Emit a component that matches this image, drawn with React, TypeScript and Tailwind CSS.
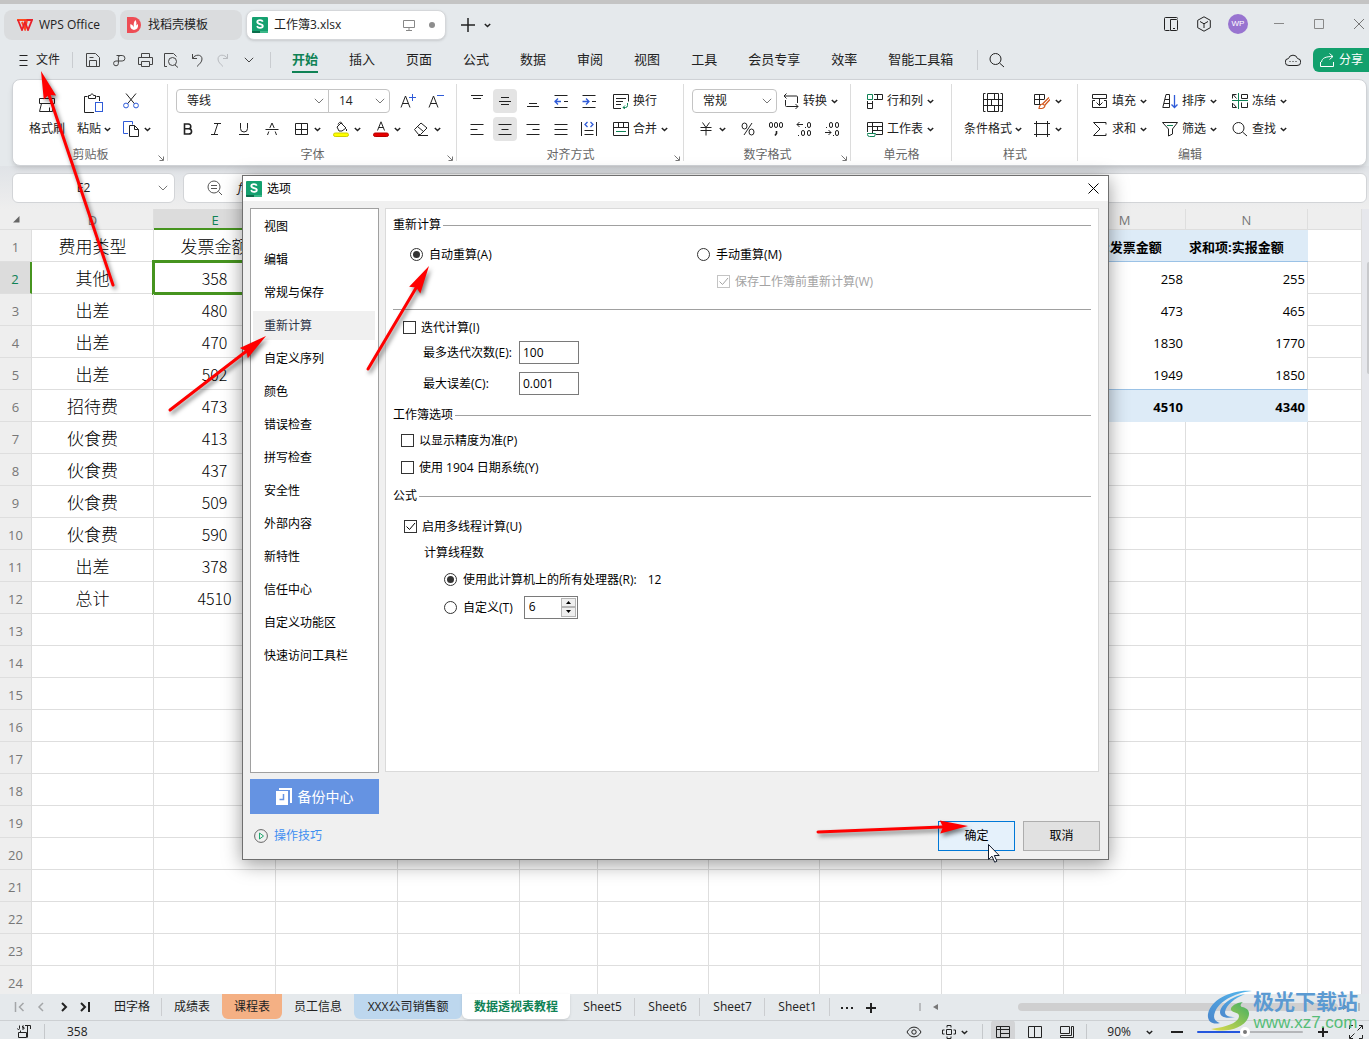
import type { ReactNode } from 'react'

type IconProps = { w?: number; h?: number; className?: string; sw?: number; children: ReactNode }

function Icon({ w = 16, h = 16, className = '', sw = 1, children }: IconProps) {
  return (
    <svg
      width={w}
      height={h}
      viewBox={`0 0 ${w} ${h}`}
      fill="none"
      stroke="currentColor"
      strokeWidth={sw}
      className={`shrink-0 ${className}`}
      aria-hidden="true"
    >
      {children}
    </svg>
  )
}

const BLUE = '#2f5bd8'
const GREEN = '#0f8255'

const Chevron = () => (
  <Icon w={7} h={5} sw={1.5}>
    <path d="M.8 1l2.7 2.5L6.200 1" />
  </Icon>
)

const WideChevron = ({ className = '' }: { className?: string }) => (
  <Icon w={10} h={6} className={className}>
    <path d="M.8.8L5 5 9.200.8" />
  </Icon>
)

const SheetLogo = () => (
  <svg width="16" height="16" viewBox="0 0 16 16" className="shrink-0" aria-hidden="true">
    <rect width="16" height="16" rx="1" fill="#14a06f" />
    <path d="M0 14h8v2H1a1 1 0 0 1-1-1z" fill="#0b6e4b" />
    <path d="M8 14h8v1a1 1 0 0 1-1 1H8z" fill="#3cb889" />
    <path
      d="M10.800 4.600C10.300 3.600 9.300 3.200 8 3.200c-1.500 0-2.700.7-2.700 1.900 0 2.700 5.500 1.300 5.500 3.900 0 1.200-1.200 1.900-2.800 1.900-1.500 0-2.500-.6-3-1.700"
      fill="none"
      stroke="#fff"
      strokeWidth="1.800"
    />
  </svg>
)

/* ---------- ribbon glyphs ---------- */

const glyphs = {
  brush: (
    <Icon w={20} h={20}>
      <path d="M7.500 5.500V1.500h5v4M2.500 10.500v-5h15v5zM4.500 10.500l-2 8h13l1-8M12.500 18v-3.500" />
    </Icon>
  ),
  paste: (
    <Icon w={20} h={20}>
      <path d="M10 19.500H.5V3.500h3M15.500 8V3.500h-3M4.500 5.500v-3h2c0-2 3-2 3 0h2v3z" />
      <rect x="11.500" y="9.500" width="7" height="9" stroke={BLUE} />
    </Icon>
  ),
  cut: (
    <Icon>
      <path d="M3 .5l8.500 10.300M13 .5L4.500 10.800" />
      <circle cx="3" cy="12.500" r="2.400" stroke={BLUE} />
      <circle cx="13" cy="12.500" r="2.400" stroke={BLUE} />
    </Icon>
  ),
  copy: (
    <Icon>
      <path d="M5 12.500H.5v-12h9v3" stroke={BLUE} />
      <path d="M6.500 4.500h5l4 4v7h-9zM11.500 4.500v4h4" />
    </Icon>
  ),
  fontUp: (
    <Icon>
      <path d="M1 14.500L5.500 3 10 14.500M2.600 10.500h5.800" />
      <path d="M9 4.500h7M12.500 1v7" stroke={BLUE} />
    </Icon>
  ),
  fontDown: (
    <Icon>
      <path d="M1 14.500L5.500 3 10 14.500M2.600 10.500h5.800" />
      <path d="M9 2.500h7" stroke={BLUE} />
    </Icon>
  ),
  bold: (
    <Icon sw={1.6}>
      <path d="M4.500 3v10h4.200c3.800 0 3.800-5.200 0-5.200H4.500h3.800c3.300 0 3.300-4.800 0-4.800z" />
    </Icon>
  ),
  italic: (
    <Icon>
      <path d="M6 2.500h7M3 13.500h7M9.800 2.500l-3.600 11" />
    </Icon>
  ),
  underline: (
    <Icon>
      <path d="M4.500 2v5.500a3.500 3.500 0 0 0 7 0V2M3 13.500h10" />
    </Icon>
  ),
  strike: (
    <Icon>
      <path d="M1.500 8.500h13M5.800 7L8 2l2.200 5M4.800 10.500L3.500 14M11.200 10.500l1.300 3.500" />
    </Icon>
  ),
  border: (
    <Icon>
      <path d="M2.500 2.500h12v11h-12zM8.500 2.500v11M2.500 8.500h12" />
    </Icon>
  ),
  fill: (
    <Icon>
      <path d="M4 6l4-4 5 5-4 3H6zM5 3.500C6 .5 9 .5 9 3M13.500 8v2" />
      <rect x=".5" y="12" width="15" height="3.500" rx="1.700" fill="#ff0" stroke="#cfcf00" />
    </Icon>
  ),
  color: (
    <Icon>
      <path d="M4.500 9.500L8 .8l3.500 8.700M5.700 6.500h4.600" />
      <rect x=".5" y="12" width="15" height="3.500" rx="1.700" fill="#e60000" stroke="#b80000" />
    </Icon>
  ),
  eraser: (
    <Icon>
      <path d="M1.500 8.500L8 2l6 5-6.500 6.500h-2zM4.500 5.500l6 5M5 14.500h10" />
    </Icon>
  ),
  top: (
    <Icon>
      <path d="M2 2.500h12M4 5.500h8" />
    </Icon>
  ),
  middle: (
    <Icon>
      <path d="M4 4.500h8M2 8.500h12M4 11.500h8" />
    </Icon>
  ),
  bottom: (
    <Icon>
      <path d="M4 10.500h8M2 13.500h12" />
    </Icon>
  ),
  outdent: (
    <Icon>
      <path d="M1.500 2.500h13M1.500 14.500h13M11 8.500h4" />
      <path d="M8 8.500H1.500M5 5.500l-3 3 3 3" stroke={BLUE} strokeWidth="1.300" />
    </Icon>
  ),
  indent: (
    <Icon>
      <path d="M1.500 2.500h13M1.500 14.500h13M11 8.500h4" />
      <path d="M1.500 8.500H8M5 5.500l3 3-3 3" stroke={BLUE} strokeWidth="1.300" />
    </Icon>
  ),
  left: (
    <Icon>
      <path d="M1.500 3.500h13M1.500 8.500h7M1.500 13.500h13" />
    </Icon>
  ),
  center: (
    <Icon>
      <path d="M1.500 3.500h13M4.500 8.500h7M1.500 13.500h13" />
    </Icon>
  ),
  right: (
    <Icon>
      <path d="M1.500 3.500h13M7.500 8.500h7M1.500 13.500h13" />
    </Icon>
  ),
  justify: (
    <Icon>
      <path d="M1.500 3.500h13M1.500 8.500h13M1.500 13.500h13" />
    </Icon>
  ),
  spread: (
    <Icon>
      <path d="M.5 1v14M15.500 1v14M3.500 9.500h9M3.500 13.500h9" />
      <path d="M6.500 1L4 3.500 6.500 6M9.500 1L12 3.500 9.500 6" stroke={BLUE} strokeWidth="1.300" />
    </Icon>
  ),
  wrap: (
    <Icon>
      <path d="M8 15.500H.5V1.500h15v7M3 5.500h10M3 8.500h7M3 11.500h5" />
      <path d="M14.500 10v2.500a2 2 0 0 1-2 2H10M12 12.500l-2 2 2 1.500" stroke={GREEN} />
    </Icon>
  ),
  merge: (
    <Icon>
      <path d="M.5 1.500h15v13H.5zM.5 6.500h15M5.500 1.500v5M10.500 1.500v5" />
      <path d="M3 10.500h10" stroke={GREEN} />
    </Icon>
  ),
  convert: (
    <Icon>
      <path d="M2.500 7v5.500a1 1 0 0 0 1 1H15M12.500 11l2.500 2.500-2.500 2.500M3.500.5L1 3l2.500 2.500M1 3h12.500a1 1 0 0 1 1 1v6" />
    </Icon>
  ),
  yen: (
    <Icon>
      <path d="M4.500 1.500l3.500 5 3.500-5M2.500 6.500h11M2.500 9.500h11M8 6.500v8" />
    </Icon>
  ),
  percent: (
    <Icon>
      <ellipse cx="4.500" cy="5" rx="2.500" ry="3" />
      <ellipse cx="11.500" cy="11" rx="2.500" ry="3" />
      <path d="M12 2L4 14" />
    </Icon>
  ),
  thousands: (
    <Icon>
      <rect x="1.500" y="1.500" width="3" height="5" rx="1.500" />
      <rect x="6.500" y="1.500" width="3" height="5" rx="1.500" />
      <rect x="11.500" y="1.500" width="3" height="5" rx="1.500" />
      <path d="M8.500 10v2.500l-1.500 2" strokeWidth="1.600" />
    </Icon>
  ),
  decLess: (
    <Icon>
      <path d="M7 3.500H1M3.500 1L1 3.500 3.500 6M9 6.500h1M2 14.500h1" />
      <rect x="11.500" y="1.500" width="3" height="5" rx="1.500" />
      <rect x="5.500" y="9.500" width="3" height="5" rx="1.500" />
      <rect x="11.500" y="9.500" width="3" height="5" rx="1.500" />
    </Icon>
  ),
  decMore: (
    <Icon>
      <path d="M1 11.500h6M4.500 9L7 11.500 4.500 14M9 14.500h1M2 6.500h1" />
      <rect x="5.500" y="1.500" width="3" height="5" rx="1.500" />
      <rect x="11.500" y="1.500" width="3" height="5" rx="1.500" />
      <rect x="11.500" y="9.500" width="3" height="5" rx="1.500" />
    </Icon>
  ),
  rowCol: (
    <Icon>
      <path d="M.5 1.500h5v5h-5z" stroke={GREEN} />
      <path d="M7 1.500h8.500v5H7M10.500 1.500v5M.5 8v7.500h5V8M.5 10.500h5" />
    </Icon>
  ),
  sheet: (
    <Icon>
      <path d="M.5 11V1.500h15v12H9M.5 5.500h15M5.500 1.500v11M5.500 9.500h10M10.500 5.500v4" />
      <path d="M.5 12.500h8l-1 3h-5a2 2 0 0 1-2-2z" stroke={GREEN} />
    </Icon>
  ),
  conditional: (
    <Icon w={20} h={20}>
      <path d="M2.500.5h-2v18h2M17.500.5h2v18h-2M4.500.5h11v18h-11zM.5 6.500h4M15.500 6.500h4M.5 12.500h4M15.500 12.500h4M4.500 6.500h11M4.500 12.500h11M11.500.5v6M8.500 6.500v6M11.500 12.500v6" />
    </Icon>
  ),
  cellStyle: (
    <Icon>
      <path d="M7 11.500H.5v-10h10V6M.5 6.500h10M5.500 1.500v10" />
      <path d="M15 4.500L8.500 11M16 6.500L11 12M8.500 11c-2 0-3 1.500-3.500 4.500 3.500.3 6-.8 6-3z" stroke="#d2571c" strokeWidth="1.200" />
    </Icon>
  ),
  frame: (
    <Icon>
      <path d="M2.500 0v16M13.500 0v16M0 2.500h16M0 13.500h16" />
    </Icon>
  ),
  down: (
    <Icon>
      <path d="M.5 1.500h14v4H.5zM3 7.500H.5v7h14v-7H12M7.500 5.500v7M4.500 9.500l3 3 3-3" />
    </Icon>
  ),
  sum: (
    <Icon>
      <path d="M14 3.500v-2H1.500L8 8l-6.500 6.500H14v-2" />
    </Icon>
  ),
  sort: (
    <Icon>
      <path d="M.8 14.500L4 1.500h3.500v13zM3 6.500h4.500M2 10.500h5.500" />
      <path d="M12.500 2v12.500M9.500 11.500l3 3 3-3" stroke={BLUE} strokeWidth="1.300" />
    </Icon>
  ),
  filter: (
    <Icon>
      <path d="M.5 1.500h15L10.500 8v5l-4 2V8z" />
      <path d="M5 4.500h6" stroke={GREEN} />
    </Icon>
  ),
  freeze: (
    <Icon>
      <path d="M.5 1.500h4M.5 1.500v4M.5 10v4.500h4M9.500 1.500h6v4h-6zM15.500 9.500v5h-6v-5M1 1.500l3.500 4M1 10.500l3.500 4" />
      <path d="M6.500 0v16M0 7.500h16" stroke={GREEN} />
    </Icon>
  ),
  search: (
    <Icon>
      <circle cx="6.500" cy="7" r="5.500" />
      <path d="M10.500 11l4.500 4" />
    </Icon>
  ),
}

type GlyphName = keyof typeof glyphs

type ToolProps = { icon: GlyphName; label: string; active?: boolean }

const Tool = ({ icon, label, active }: ToolProps) => (
  <button
    type="button"
    aria-label={label}
    className="flex h-7 w-7 shrink-0 items-center justify-center"
  >
    <span className={`flex h-6 w-6 items-center justify-center rounded ${active ? 'bg-[#e4e4e4]' : ''}`}>
      {glyphs[icon]}
    </span>
  </button>
)

const DropTool = ({ icon, label, className = 'w-10' }: { icon: GlyphName; label: string; className?: string }) => (
  <button type="button" aria-label={label} className={`flex h-7 shrink-0 items-center gap-[5px] ${className}`}>
    {glyphs[icon]}
    <Chevron />
  </button>
)

type TextToolProps = { icon: GlyphName; text: string; drop?: boolean; className?: string }

const TextTool = ({ icon, text, drop = true, className = '' }: TextToolProps) => (
  <button type="button" className={`flex h-7 shrink-0 items-center gap-1 ${className}`}>
    {glyphs[icon]}
    {text}
    {drop && <Chevron />}
  </button>
)

function Combo({ label, value, className }: { label: string; value: string; className: string }) {
  return (
    <div className={`relative flex h-6 items-center border border-[#c4c4c4] ${className}`}>
      <select aria-label={label} className="h-full w-full appearance-none bg-transparent pl-[10px] outline-none">
        <option>{value}</option>
      </select>
      <WideChevron className="pointer-events-none absolute right-1 text-[#777]" />
    </div>
  )
}

type GroupProps = { title: string; className: string; launcher?: boolean; last?: boolean; children: ReactNode }

function Group({ title, className, launcher, last, children }: GroupProps) {
  return (
    <section className={`relative flex shrink-0 flex-col pt-[7px] ${className}`}>
      {children}
      <div className="flex h-[22px] items-center justify-center pt-[2px] text-[#666]">{title}</div>
      {launcher && (
        <Icon w={6} h={6} className="absolute right-[4px] bottom-1 text-[#777]">
          <path d="M.5 .5l4.500 4.500M5.500 1.500v4h-4" />
        </Icon>
      )}
      {!last && <span className="absolute top-1 right-0 bottom-1 w-px bg-[#dcdcdc]" />}
    </section>
  )
}

function TitleBar() {
  return (
    <header className="flex h-[42px] shrink-0 items-center pl-1 text-xs">
      <button type="button" className="flex h-[30px] w-28 items-center gap-[6px] rounded-lg bg-[#dadcde] pl-[13px]">
        <svg width="16" height="12" viewBox="0 0 16 12" fill="none" aria-hidden="true">
          <path d="M0 1h10l-2 9-3-7" stroke="#ff4a1c" strokeWidth="2" />
          <path d="M1 1l4 10L8 3l3 8 4-10H9.500" stroke="#e8202a" strokeWidth="1.800" />
        </svg>
        WPS Office
      </button>
      <button type="button" className="ml-1 flex h-[30px] w-[122px] items-center gap-[6px] rounded-lg bg-[#dadcde] pl-[6px]">
        <svg width="16" height="16" viewBox="0 0 16 16" aria-hidden="true">
          <path d="M1 0h6a8 8 0 0 1 0 16H1z" fill="#ee4d55" />
          <path d="M8 13C4 12 4 9 4.500 7c2 .7 3 2 3.500 3.500C7.200 7 8 4.500 9.500 3c1 2 1.300 3.500.6 5.500L12 7c.5 3.500-.8 5.500-4 6z" fill="#fff" />
        </svg>
        找稻壳模板
      </button>
      <div className="ml-1 flex h-[30px] w-[200px] items-center gap-[6px] rounded-lg border border-[#d5d7da] bg-white pr-[10px] pl-[5px] shadow-sm">
        <SheetLogo />
        <span className="flex-1">工作簿3.xlsx</span>
        <Icon w={12} h={12} className="text-[#888]">
          <path d="M.5 1.500h11v7H.5zM6 8.500v3M3 11.500h6" />
        </Icon>
        <span className="ml-2 h-[6px] w-[6px] rounded-full bg-[#8d8d8d]" />
      </div>
      <button type="button" aria-label="新建" className="ml-[14px]">
        <Icon sw={1.5}>
          <path d="M8 1v14M1 8h14" />
        </Icon>
      </button>
      <button type="button" aria-label="标签列表" className="ml-2">
        <Chevron />
      </button>
      <div className="flex-1" />
      <div className="flex items-center pb-[2px]">
        <Icon w={14} h={14}>
          <path d="M5.500 13.500h-4a1 1 0 0 1-1-1v-11a1 1 0 0 1 1-1h11a1 1 0 0 1 1 1M6.500 2.500h6a1 1 0 0 1 1 1v9a1 1 0 0 1-1 1h-6zM9 11.500h2" />
        </Icon>
        <Icon w={16} h={16} className="ml-[18px]">
          <path d="M8 .8l6.300 3.500v7.400L8 15.200l-6.300-3.500V4.300zM4 5.500l4 2.300 4-2.300M8 7.800V12" />
        </Icon>
        <span className="ml-4 flex h-5 w-5 items-center justify-center rounded-full bg-[#9874d0] font-['Liberation_Sans',sans-serif] text-[8px] text-white">
          WP
        </span>
        <button type="button" aria-label="最小化" className="ml-[26px] text-[#888]">
          <Icon w={10} h={10}>
            <path d="M0 4.500h10" />
          </Icon>
        </button>
        <button type="button" aria-label="最大化" className="ml-[30px] text-[#888]">
          <Icon w={10} h={10}>
            <path d="M.5.5h9v9h-9z" />
          </Icon>
        </button>
        <button type="button" aria-label="关闭窗口" className="mr-[5px] ml-[30px] text-[#777]">
          <Icon w={10} h={10}>
            <path d="M0 0l10 10M10 0L0 10" />
          </Icon>
        </button>
      </div>
    </header>
  )
}

const menus = ['开始', '插入', '页面', '公式', '数据', '审阅', '视图', '工具', '会员专享', '效率', '智能工具箱']

function MenuBar() {
  return (
    <nav className="flex h-[33px] shrink-0 items-center pb-[6px] text-[13px]">
      <button type="button" className="flex items-center gap-[7px] pl-[19px] text-xs">
        <Icon w={10} h={12}>
          <path d="M.5 1.500h8M.5 6.500h8M.5 11.500h8" />
        </Icon>
        文件
      </button>
      <span className="mr-[12px] ml-3 h-4 w-px bg-[#c9ccd0]" />
      <div className="flex items-center gap-[10px] text-[#444]">
        <Icon>
          <path d="M1.500 14.500v-13h9l4 4v9zM4.500 14.500v-6h7v6M4.500 5.500h4" />
        </Icon>
        <Icon>
          <path d="M5.500 3.500h5.700a2.700 2.700 0 0 1 0 5.500H5a2.400 2.400 0 1 0 2.400 2.400V5.500a2 2 0 0 1 2-2" />
        </Icon>
        <Icon>
          <path d="M4.500 5V1.500h8V5M4 12.500H1.500v-7h14v7H13M4.500 9.500h8v5h-8z" />
        </Icon>
        <Icon>
          <path d="M4 14.500H1.500v-13h9l3 3M12 13l3 2.500" />
          <circle cx="9.500" cy="9.500" r="4" />
        </Icon>
        <Icon>
          <path d="M3.500 2v4.500h4.500M3.500 6.500C6 2 13 2 13 7c0 3-2.500 5-5 7.500" />
        </Icon>
        <Icon className="text-[#b8bbbf]">
          <path d="M12.500 2v4.500H8M12.500 6.500C10 2 3 2 3 7c0 3 2.500 5 5 7.500" />
        </Icon>
        <WideChevron className="ml-[3px]" />
      </div>
      <span className="ml-4 h-4 w-px bg-[#c9ccd0]" />
      <div className="ml-[21px] flex gap-[31px]">
        {menus.map((name, i) => (
          <button
            key={name}
            type="button"
            className={
              i === 0
                ? 'h-[27px] border-b-2 border-[#0f8255] pt-[2px] font-bold text-[#0f8255]'
                : 'h-[27px] border-b-2 border-transparent pt-[2px]'
            }
          >
            {name}
          </button>
        ))}
      </div>
      <span className="mr-[11px] ml-6 h-5 w-px bg-[#c9ccd0]" />
      {glyphs.search}
      <div className="flex-1" />
      <Icon w={16} h={14} className="mr-3">
        <path d="M4 12.500a3.500 3.500 0 0 1-.5-7 4.700 4.700 0 0 1 9 0 3.500 3.500 0 0 1-.5 7zM4.500 8.500h1M7.500 8.500h1M10.500 8.500h1" />
      </Icon>
      <button type="button" className="flex h-6 items-center gap-1 rounded-l-md bg-[#12a06d] pr-[6px] pl-[7px] text-xs text-white">
        <Icon w={15} h={14}>
          <path d="M.5 9v4.500h13V9M1.500 9c.5-4 4-5.500 11.500-5.500M9.500 .5l3.500 3-3.500 3" />
        </Icon>
        分享
      </button>
    </nav>
  )
}

function Ribbon() {
  return (
    <div className="relative ml-3 mr-[2px] flex h-[87px] shrink-0 overflow-hidden rounded-lg border border-[#cfd2d6] bg-white text-xs shadow-md">
      <Group title="剪贴板" className="w-[155px]" launcher>
        <div className="flex gap-3 pl-4">
          {[
            { name: '格式刷', icon: glyphs.brush, drop: false },
            { name: '粘贴', icon: glyphs.paste, drop: true },
          ].map((b) => (
            <button key={b.name} type="button" className="flex flex-col items-center">
              <span className="flex h-7 items-center pt-1">{b.icon}</span>
              <span className="flex h-7 items-center gap-[3px]">
                {b.name}
                {b.drop && <Chevron />}
              </span>
            </button>
          ))}
          <div>
            <div className="flex h-7 items-center">
              <button type="button" aria-label="剪切">
                {glyphs.cut}
              </button>
            </div>
            <DropTool icon="copy" label="复制" />
          </div>
        </div>
      </Group>

      <Group title="字体" className="w-[289px]" launcher>
        <div className="flex h-7 items-center pl-2">
          <Combo label="字体" value="等线" className="w-[153px] rounded-l" />
          <Combo label="字号" value="14" className="-ml-px w-[62px] rounded-r" />
          <span className="w-1" />
          <Tool icon="fontUp" label="增大字号" />
          <Tool icon="fontDown" label="减小字号" />
        </div>
        <div className="flex h-7 items-center pl-[6px]">
          <Tool icon="bold" label="加粗" />
          <Tool icon="italic" label="倾斜" />
          <Tool icon="underline" label="下划线" />
          <Tool icon="strike" label="删除线" />
          <span className="w-[7px]" />
          <DropTool icon="border" label="边框" />
          <DropTool icon="fill" label="填充颜色" />
          <DropTool icon="color" label="字体颜色" />
          <DropTool icon="eraser" label="清除" />
        </div>
      </Group>

      <Group title="对齐方式" className="w-[227px]" launcher>
        <div className="flex h-7 items-center pl-[6px]">
          <Tool icon="top" label="顶端对齐" />
          <Tool icon="middle" label="垂直居中" active />
          <Tool icon="bottom" label="底端对齐" />
          <Tool icon="outdent" label="减少缩进" />
          <Tool icon="indent" label="增加缩进" />
          <TextTool icon="wrap" text="换行" drop={false} className="ml-[10px]" />
        </div>
        <div className="flex h-7 items-center pl-[6px]">
          <Tool icon="left" label="左对齐" />
          <Tool icon="center" label="水平居中" active />
          <Tool icon="right" label="右对齐" />
          <Tool icon="justify" label="两端对齐" />
          <Tool icon="spread" label="分散对齐" />
          <TextTool icon="merge" text="合并" className="ml-[10px]" />
        </div>
      </Group>

      <Group title="数字格式" className="w-[167px]" launcher>
        <div className="flex h-7 items-center pl-2">
          <Combo label="数字格式" value="常规" className="w-[85px] rounded" />
          <TextTool icon="convert" text="转换" className="ml-[6px]" />
        </div>
        <div className="flex h-7 items-center pl-[14px]">
          <DropTool icon="yen" label="货币" className="w-9" />
          <Tool icon="percent" label="百分比" />
          <Tool icon="thousands" label="千位分隔" />
          <Tool icon="decLess" label="减少小数位" />
          <Tool icon="decMore" label="增加小数位" />
        </div>
      </Group>

      <Group title="单元格" className="w-[101px]">
        <TextTool icon="rowCol" text="行和列" className="pl-4" />
        <TextTool icon="sheet" text="工作表" className="pl-4" />
      </Group>

      <Group title="样式" className="w-[126px]">
        <div className="flex gap-3 pl-3">
          <button type="button" className="flex flex-col items-center">
            <span className="flex h-7 items-center pt-1">{glyphs.conditional}</span>
            <span className="flex h-7 items-center gap-[3px]">
              条件格式
              <Chevron />
            </span>
          </button>
          <div>
            <DropTool icon="cellStyle" label="单元格样式" />
            <DropTool icon="frame" label="表格边框" />
          </div>
        </div>
      </Group>

      <Group title="编辑" className="w-[224px]" last>
        <div className="grid grid-cols-[70px_70px_70px] pl-[14px]">
          <TextTool icon="down" text="填充" />
          <TextTool icon="sort" text="排序" />
          <TextTool icon="freeze" text="冻结" />
          <TextTool icon="sum" text="求和" />
          <TextTool icon="filter" text="筛选" />
          <TextTool icon="search" text="查找" />
        </div>
      </Group>
    </div>
  )
}

function FormulaBar() {
  return (
    <div className="flex h-[43px] shrink-0 items-center gap-2 bg-linear-to-b from-[#e0e3e7] to-[#eee] pr-[2px] pl-3 text-xs">
      <div className="relative flex h-[30px] w-[163px] items-center rounded-md border border-[#d2d4d7] bg-white">
        <input aria-label="名称框" defaultValue="E2" className="w-full bg-transparent pr-5 text-center outline-none" />
        <WideChevron className="pointer-events-none absolute right-[6px] text-[#777]" />
      </div>
      <div className="flex h-[30px] flex-1 items-center rounded-md border border-[#d2d4d7] bg-white pl-[23px]">
        <Icon className="text-[#555]">
          <circle cx="7" cy="7" r="6" />
          <path d="M11.500 11.500L15 15M4 5.500h6M4 8.500h6" />
        </Icon>
        <label htmlFor="formula" className="pl-[15px] text-[13px] italic">
          fx
        </label>
        <input id="formula" className="ml-2 min-w-0 flex-1 outline-none" />
      </div>
    </div>
  )
}

const columns = [
  { name: 'D', width: 'w-[122px]' },
  { name: 'E', width: 'w-[122px]' },
  { name: 'F', width: 'w-[122px]' },
  { name: 'G', width: 'w-[122px]' },
  { name: 'H', width: 'w-[78px]' },
  { name: 'I', width: 'w-[111px]' },
  { name: 'J', width: 'w-[111px]' },
  { name: 'K', width: 'w-[122px]' },
  { name: 'L', width: 'w-[122px]' },
  { name: 'M', width: 'w-[122px]' },
  { name: 'N', width: 'w-[122px]' },
  { name: '', width: '' },
]

const expenses = [
  ['费用类型', '发票金额'],
  ['其他', '358'],
  ['出差', '480'],
  ['出差', '470'],
  ['出差', '502'],
  ['招待费', '473'],
  ['伙食费', '413'],
  ['伙食费', '437'],
  ['伙食费', '509'],
  ['伙食费', '590'],
  ['出差', '378'],
  ['总计', '4510'],
]

const pivot = [
  ['求和项:发票金额', '求和项:实报金额'],
  ['258', '255'],
  ['473', '465'],
  ['1830', '1770'],
  ['1949', '1850'],
  ['4510', '4340'],
]

function pivotClass(row: number, col: string) {
  const edge = col === 'N' && row > 0 && row < 5 ? 'border-r border-r-[#dedede] pr-[2px]' : 'pr-[3px]'
  if (row === 0) return 'border-b border-b-[#9bc2e6] bg-[#ddebf7] pl-[3px] text-left font-bold'
  if (row === 5) return `bg-[#ddebf7] text-right font-bold ${edge}`
  if (row === 4) return `border-b border-b-[#9bc2e6] text-right ${edge}`
  return `text-right ${edge}`
}

function Grid() {
  return (
    <div className="flex min-h-0 flex-1 overflow-hidden">
      <div className="min-w-0 flex-1 overflow-hidden bg-white">
        <table className="w-full table-fixed border-separate border-spacing-0">
          <colgroup>
            <col className="w-8" />
            {columns.map((c, i) => (
              <col key={i} className={c.width} />
            ))}
          </colgroup>
          <thead>
            <tr className="h-[21px] bg-[#eee] text-[13px] leading-4 text-[#777]">
              <th aria-label="全选" className="border-b border-b-[#dedede] p-0">
                <Icon w={7} h={7} className="ml-[13px]">
                  <path d="M6.500 0v6.500H0z" fill="#666" stroke="none" />
                </Icon>
              </th>
              {columns.map((c, i) => (
                <th
                  key={i}
                  className={
                    c.name === 'E'
                      ? 'border-b-2 border-b-[#46941f] bg-[#dcdcdc] p-0 pt-[2px] font-normal text-[#0f8255]'
                      : 'border-r border-b border-r-[#dedede] border-b-[#dedede] p-0 pt-[2px] font-normal'
                  }
                >
                  {c.name}
                </th>
              ))}
            </tr>
          </thead>
          <tbody>
            {Array.from({ length: 24 }, (_, r) => (
              <tr key={r} className="h-8">
                <th
                  className={
                    r === 1
                      ? 'border-r-2 border-b border-r-[#46941f] border-b-[#dedede] bg-[#dcdcdc] p-0 pt-[2px] text-[13px] leading-5 font-normal text-[#0f8255]'
                      : 'border-r border-b border-[#dedede] bg-[#eee] p-0 pt-[2px] text-[13px] leading-5 font-normal text-[#777]'
                  }
                >
                  {r + 1}
                </th>
                {columns.map((c, i) => {
                  if ((c.name === 'M' || c.name === 'N') && r < 6) {
                    return (
                      <td
                        key={i}
                        className={`overflow-hidden pt-[2px] pb-0 text-[13px] leading-5 whitespace-nowrap text-black ${pivotClass(r, c.name)}`}
                      >
                        {pivot[r][c.name === 'M' ? 0 : 1]}
                      </td>
                    )
                  }
                  const text = i < 2 && r < 12 ? expenses[r][i] : ''
                  const numeric = i === 1 && r > 0
                  return (
                    <td
                      key={i}
                      className={`relative border-r border-b border-[#dedede] p-0 text-center leading-6 font-light whitespace-nowrap text-black font-['Noto_Sans_CJK_SC',sans-serif] ${numeric ? 'text-base' : 'text-[17px]'}`}
                    >
                      {text}
                      {i === 1 && r === 1 && (
                        <span className="absolute -top-[2px] -right-[2px] -bottom-[2px] -left-[2px] border-[3px] border-[#46941f]" />
                      )}
                    </td>
                  )
                })}
              </tr>
            ))}
          </tbody>
        </table>
      </div>
      <div className="w-[7px] bg-[#e6e7ec] pt-[53px] pl-[5px]">
        <div className="h-28 rounded-l bg-[#c8c9cc]" />
      </div>
    </div>
  )
}

const sheets = [
  { name: '田字格', look: '' },
  { name: '成绩表', look: '' },
  { name: '课程表', look: 'rounded-b-md bg-[#f4b084]' },
  { name: '员工信息', look: '' },
  { name: 'XXX公司销售额', look: 'min-w-[108px] rounded-b-md bg-[#bdd7ee]' },
  { name: '数据透视表教程', look: 'min-w-[108px] rounded-b-md bg-white font-bold text-[#0f8255] shadow-sm' },
  { name: 'Sheet5', look: 'min-w-[65px]' },
  { name: 'Sheet6', look: 'min-w-[65px]' },
  { name: 'Sheet7', look: 'min-w-[65px]' },
  { name: 'Sheet1', look: 'min-w-[65px]' },
]

function SheetTabs() {
  return (
    <div className="flex h-[27px] shrink-0 items-start border-b border-[#cdd0d3] text-xs">
      <div className="flex h-[26px] w-[102px] items-center gap-[11px] pl-[14px]">
        <Icon w={11} h={10} sw={1.5} className="text-[#a4a6a8]">
          <path d="M1.500 0v10M9.500 1L5.500 5l4 4" />
        </Icon>
        <Icon w={11} h={10} sw={1.5} className="text-[#a4a6a8]">
          <path d="M7 1L3 5l4 4" />
        </Icon>
        <Icon w={11} h={10} sw={2}>
          <path d="M4 1l4 4-4 4" />
        </Icon>
        <Icon w={11} h={10} sw={2}>
          <path d="M1 1l4 4-4 4M9 0v10" />
        </Icon>
      </div>
      {sheets.map((s, i) => (
        <button key={s.name} type="button" className={`relative flex h-[25px] items-center justify-center px-3 ${s.look}`}>
          {s.name}
          {(i === 0 || i > 5) && <span className="absolute top-1 right-0 h-[18px] w-px bg-[#cbcdd0]" />}
        </button>
      ))}
      <div className="flex h-[27px] items-center gap-3 pl-[10px]">
        <Icon w={14} h={4} sw={2}>
          <path d="M1 2h2M6 2h2M11 2h2" />
        </Icon>
        <Icon w={10} h={10} sw={2}>
          <path d="M5 0v10M0 5h10" />
        </Icon>
      </div>
      <div className="ml-[43px] flex h-[26px] flex-1 items-center">
        <span className="h-2 w-[2px] bg-[#b9bbbe]" />
        <Icon w={6} h={6} className="ml-3">
          <path d="M5 0v6L0 3z" fill="#777" stroke="none" />
        </Icon>
        <div className="ml-[79px] h-2 w-[320px] rounded-full bg-[#cfcfd0]" />
        <Icon w={6} h={6} className="ml-1">
          <path d="M1 0v6l5-3z" fill="#777" stroke="none" />
        </Icon>
        <span className="ml-[10px] h-2 w-[2px] bg-[#b9bbbe]" />
      </div>
    </div>
  )
}

function StatusBar() {
  return (
    <footer className="flex h-[18px] shrink-0 items-start overflow-hidden text-xs">
      <div className="flex h-[22px] w-full items-center">
        <Icon w={15} h={14} className="ml-4">
          <path d="M3.500.5v3a1 1 0 0 1-2 0M8 1H6.500v1.500H8V4H6M9 .5h5.500V4M11.500.5v12M2.500 12.500v-5h8v5zM4.500 7.500v-2" />
        </Icon>
        <span className="mr-[22px] ml-[13px] h-4 w-px bg-[#c5c8cb]" />
        358
        <div className="flex-1" />
        <Icon w={16} h={12}>
          <path d="M1 6c3.500-6.500 10.500-6.500 14 0-3.500 6.500-10.500 6.500-14 0z" />
          <circle cx="8" cy="6" r="2.200" />
        </Icon>
        <Icon w={14} h={14} className="ml-5">
          <path d="M4.500 4.500h5v5h-5zM5 2.500V.5h4v2M5 11.500v2h4v-2M2.500 5H.5v4h2M11.500 5h2v4h-2" />
        </Icon>
        <span className="ml-[5px]">
          <Chevron />
        </span>
        <span className="ml-[14px] h-4 w-px bg-[#c5c8cb]" />
        <span className="ml-2 flex h-6 w-6 items-center justify-center rounded bg-[#d3d4d6]">
          <Icon w={14} h={12}>
            <path d="M.5.5h13v11H.5zM.5 3.500h13M4.500 7.500h9M4.500.5v11" />
          </Icon>
        </span>
        <Icon w={14} h={12} className="ml-[13px]">
          <path d="M.5.5h13v11H.5zM6.500.5v11" />
        </Icon>
        <Icon w={14} h={12} className="ml-[18px]">
          <path d="M.5.5h9v7h-9zM11.500.5h2v11H.5v-2h11z" />
        </Icon>
        <span className="mr-5 ml-3 h-4 w-px bg-[#c5c8cb]" />
        90%
        <span className="ml-[15px]">
          <Chevron />
        </span>
        <button type="button" aria-label="缩小" className="ml-[18px]">
          <Icon w={12} h={12} sw={2}>
            <path d="M0 6h12" />
          </Icon>
        </button>
        <input
          type="range"
          aria-label="显示比例"
          min={10}
          max={200}
          defaultValue={95}
          className="ml-[14px] h-[2px] w-[106px] appearance-none rounded bg-linear-to-r from-[#2456dd] from-45% to-[#b4b6b9] to-45% [&::-webkit-slider-thumb]:h-[10px] [&::-webkit-slider-thumb]:w-[10px] [&::-webkit-slider-thumb]:appearance-none [&::-webkit-slider-thumb]:rounded-full [&::-webkit-slider-thumb]:border-[3px] [&::-webkit-slider-thumb]:border-white [&::-webkit-slider-thumb]:bg-[#777]"
        />
        <button type="button" aria-label="放大" className="ml-[15px]">
          <Icon w={10} h={10} sw={2}>
            <path d="M5 0v10M0 5h10" />
          </Icon>
        </button>
        <Icon w={14} h={14} className="mr-[6px] ml-[21px]">
          <path d="M.5 4V.5H4M10 .5h3.500V4M13.500 10v3.500H10M4 13.500H.5V10M13 1L8.500 5.500M1 13l4.500-4.500" />
        </Icon>
      </div>
    </footer>
  )
}

/* ---------- options dialog ---------- */

const pages = [
  '视图',
  '编辑',
  '常规与保存',
  '重新计算',
  '自定义序列',
  '颜色',
  '错误检查',
  '拼写检查',
  '安全性',
  '外部内容',
  '新特性',
  '信任中心',
  '自定义功能区',
  '快速访问工具栏',
]

const Section = ({ title }: { title: string }) => (
  <h3 className="mt-[5px] flex h-[22px] items-center gap-[2px] pl-[7px]">
    {title}
    <span className="h-px flex-1 bg-[#a0a0a0]" />
  </h3>
)

type ChoiceProps = {
  type: 'radio' | 'checkbox'
  text: string
  name?: string
  checked?: boolean
  disabled?: boolean
}

function Choice({ type, text, name, checked, disabled }: ChoiceProps) {
  const round = type === 'radio'
  return (
    <label className={`flex items-center ${round ? 'gap-[6px]' : 'gap-[5px]'} ${disabled ? 'text-[#a3a3a3]' : ''}`}>
      <span className="relative flex h-[13px] w-[13px] items-center justify-center">
        <input
          type={type}
          name={name}
          defaultChecked={checked}
          disabled={disabled}
          className={`peer h-[13px] w-[13px] appearance-none border bg-white ${round ? 'rounded-full' : ''} ${disabled ? 'border-[#c4c4c4]' : 'border-[#333]'}`}
        />
        {round ? (
          <span className="pointer-events-none absolute hidden h-[7px] w-[7px] rounded-full bg-[#333] peer-checked:block" />
        ) : (
          <Icon w={11} h={11} className="pointer-events-none absolute hidden peer-checked:block">
            <path d="M1.500 5.500l3 3 5.500-6.500" />
          </Icon>
        )}
      </span>
      <span className="pt-px">{text}</span>
    </label>
  )
}

function Field({ id, label, value }: { id: string; label: string; value: string }) {
  return (
    <div className="flex h-[31px] items-center pl-[37px]">
      <label htmlFor={id} className="w-24">
        {label}
      </label>
      <input id={id} defaultValue={value} className="h-[23px] w-[60px] border border-[#7a7a7a] bg-white px-[3px] outline-none" />
    </div>
  )
}

function OptionsDialog() {
  return (
    <div
      role="dialog"
      aria-label="选项"
      className="absolute top-[175px] left-[242px] z-10 flex h-[685px] w-[867px] flex-col border border-[#6f6f6f] bg-[#f0f0f0] text-xs text-black shadow-[0_4px_18px_rgba(0,0,0,0.4)]"
    >
      <div className="flex h-[25px] shrink-0 items-center gap-[5px] bg-white pl-[3px]">
        <SheetLogo />
        <h2 className="flex-1">选项</h2>
        <button type="button" aria-label="关闭" className="mr-[9px]">
          <Icon w={11} h={11}>
            <path d="M.5.5l10 10M10.500.5l-10 10" />
          </Icon>
        </button>
      </div>
      <div className="flex min-h-0 flex-1 gap-[6px] pt-[7px] pr-[9px] pl-[7px]">
        <div className="flex w-[129px] flex-col">
          <ul className="h-[565px] border border-[#a0a0a0] bg-white px-[2px] pt-[3px]">
            {pages.map((p) => (
              <li key={p} className="mb-1">
                <button
                  type="button"
                  className={`flex h-[29px] w-[122px] items-center pl-[11px] ${p === '重新计算' ? 'bg-[#f0f0f0] text-[#2c3347]' : ''}`}
                >
                  {p}
                </button>
              </li>
            ))}
          </ul>
          <button type="button" className="mt-[6px] flex h-[35px] items-center justify-center gap-[6px] bg-[#6593e2] text-sm text-white">
            <svg width="16" height="17" viewBox="0 0 16 17" aria-hidden="true">
              <path d="M3 0h13v15h-2V2H3z" fill="#fff" />
              <path d="M0 3h12v14H0z" fill="#fff" />
              <path d="M7.500 6v5.500H3.500" fill="none" stroke="#6593e2" strokeWidth="1.500" />
            </svg>
            备份中心
          </button>
          <a href="#tips" className="mt-[13px] flex h-[18px] items-center gap-[6px] pl-1 text-[#3f8ef0]">
            <Icon w={14} h={14} className="text-[#666]">
              <circle cx="7" cy="7" r="6.400" />
              <path d="M5.500 4l4 3-4 3z" stroke="#1fa86e" />
            </Icon>
            操作技巧
          </a>
        </div>
        <div className="flex min-w-0 flex-1 flex-col">
          <form className="h-[564px] border border-[#dadada] bg-white pr-[7px]">
            <Section title="重新计算" />
            <div className="grid h-9 grid-cols-[287px_1fr] items-center pl-6">
              <Choice type="radio" name="mode" text="自动重算(A)" checked />
              <Choice type="radio" name="mode" text="手动重算(M)" />
            </div>
            <div className="flex h-[18px] items-center pl-[331px]">
              <Choice type="checkbox" text="保存工作簿前重新计算(W)" checked disabled />
            </div>
            <hr className="mt-[19px] ml-[7px] border-[#a0a0a0]" />
            <div className="mt-[7px] flex h-5 items-center pl-[17px]">
              <Choice type="checkbox" text="迭代计算(I)" />
            </div>
            <Field id="iterations" label="最多迭代次数(E):" value="100" />
            <Field id="tolerance" label="最大误差(C):" value="0.001" />
            <Section title="工作簿选项" />
            <div className="flex h-7 items-center pl-[15px]">
              <Choice type="checkbox" text="以显示精度为准(P)" />
            </div>
            <div className="flex h-[26px] items-center pl-[15px]">
              <Choice type="checkbox" text="使用 1904 日期系统(Y)" />
            </div>
            <Section title="公式" />
            <div className="flex h-[38px] items-center pl-[18px]">
              <Choice type="checkbox" text="启用多线程计算(U)" checked />
            </div>
            <div className="flex h-4 items-center pl-[38px]">计算线程数</div>
            <div className="flex h-9 items-center gap-[11px] pl-[58px]">
              <Choice type="radio" name="threads" text="使用此计算机上的所有处理器(R):" checked />
              <span className="pt-px">12</span>
            </div>
            <div className="flex h-5 items-center gap-[11px] pl-[58px]">
              <Choice type="radio" name="threads" text="自定义(T)" />
              <div className="flex h-[23px] w-[54px] border border-[#7a7a7a] bg-white p-px">
                <input aria-label="线程数" defaultValue="6" className="w-[35px] pl-[3px] outline-none" />
                <div className="flex flex-1 flex-col">
                  <button type="button" aria-label="增加" className="flex flex-1 items-center justify-center border border-[#b5b5b5] bg-[#efefef]">
                    <Icon w={5} h={3}>
                      <path d="M0 3l2.500-3L5 3z" fill="#000" stroke="none" />
                    </Icon>
                  </button>
                  <button type="button" aria-label="减少" className="flex flex-1 items-center justify-center border border-[#b5b5b5] bg-[#efefef]">
                    <Icon w={5} h={3}>
                      <path d="M0 0h5L2.500 3z" fill="#000" stroke="none" />
                    </Icon>
                  </button>
                </div>
              </div>
            </div>
          </form>
          <div className="mt-[49px] -mr-px flex justify-end gap-2">
            <button type="button" className="h-[30px] w-[77px] border border-[#0078d7] bg-[#e5f1fb]">
              确定
            </button>
            <button type="button" className="h-[30px] w-[77px] border border-[#adadad] bg-[#e1e1e1]">
              取消
            </button>
          </div>
        </div>
      </div>
    </div>
  )
}

/* ---------- red pointers, cursor and site mark drawn over everything ---------- */

const arrows = [
  { from: [113, 285], to: [41, 71] },
  { from: [170, 410], to: [266, 336] },
  { from: [368, 369], to: [429, 266] },
  { from: [818, 832], to: [968, 826] },
]

function Arrow({ from, to }: { from: number[]; to: number[] }) {
  const dx = to[0] - from[0]
  const dy = to[1] - from[1]
  const len = Math.hypot(dx, dy)
  const angle = (Math.atan2(dy, dx) * 180) / Math.PI
  return (
    <g transform={`translate(${from[0]} ${from[1]}) rotate(${angle})`}>
      <path d={`M0 0H${len - 20}`} stroke="#f00" strokeWidth="3" strokeLinecap="round" />
      <path d={`M${len} 0l-28 -6.500 3 6.500 -3 6.500z`} fill="#f00" />
    </g>
  )
}

function Overlay() {
  return (
    <div className="pointer-events-none absolute inset-0 z-20">
      <svg className="h-full w-full drop-shadow-[2px_3px_2px_rgba(0,0,0,0.5)]" aria-hidden="true">
        {arrows.map((a, i) => (
          <Arrow key={i} from={a.from} to={a.to} />
        ))}
      </svg>
      <svg width="14" height="21" viewBox="0 0 14 21" className="absolute top-[843px] left-[987px]" aria-hidden="true">
        <path d="M1.500 1.500v15l3.500-3.300 2.700 6 2.200-1-2.600-5.700h4.900z" fill="#fff" stroke="#111a2c" />
      </svg>
      <div className="absolute right-[11px] bottom-[6px] flex items-center">
        <svg width="46" height="42" viewBox="0 0 46 42" aria-hidden="true">
          <defs>
            <linearGradient id="swoosh" x1="0" y1="1" x2="1" y2="0">
              <stop offset="0" stopColor="#4a86cc" />
              <stop offset="1" stopColor="#54b9ee" />
            </linearGradient>
            <linearGradient id="leaf" x1="0" y1="1" x2="1" y2="0">
              <stop offset="0" stopColor="#e3dc4a" />
              <stop offset="1" stopColor="#3fae62" />
            </linearGradient>
          </defs>
          <path d="M45 1C26-1 4 9 1 24c-1 8 5 11 12 9-6-2-7-6-5-11C12 12 26 3 45 1z" fill="url(#swoosh)" />
          <path d="M38 4C26 6 14 14 13 22c0 5 6 7 15 5-6 0-10-1-10-5C19 15 28 8 38 4z" fill="url(#swoosh)" />
          <path d="M36 12c-8 1-13 5-12 8 2 3 8 2 8 6 0 6-11 11-28 13 14 4 32 0 37-11 3-7-1-10-6-11-2-1-2-3 1-5z" fill="url(#leaf)" />
        </svg>
        <div className="text-center">
          <div className="text-[21px] leading-6 font-bold text-[#5b9ad2]">极光下载站</div>
          <div className="font-['Liberation_Sans',sans-serif] text-[17px] leading-5 font-medium text-[#55bd78]">www.xz7.com</div>
        </div>
      </div>
    </div>
  )
}

export default function App() {
  return (
    <div className="relative flex h-screen flex-col overflow-hidden border-t-4 border-[#c4c4c4] bg-[#e5e9ec] font-['Open_Sans','Noto_Sans_CJK_SC',sans-serif] text-[#222]">
      <TitleBar />
      <MenuBar />
      <Ribbon />
      <FormulaBar />
      <Grid />
      <SheetTabs />
      <StatusBar />
      <div className="pointer-events-none absolute -top-1 right-0 bottom-0 left-0">
        <div className="pointer-events-auto">
          <OptionsDialog />
        </div>
        <Overlay />
      </div>
    </div>
  )
}
